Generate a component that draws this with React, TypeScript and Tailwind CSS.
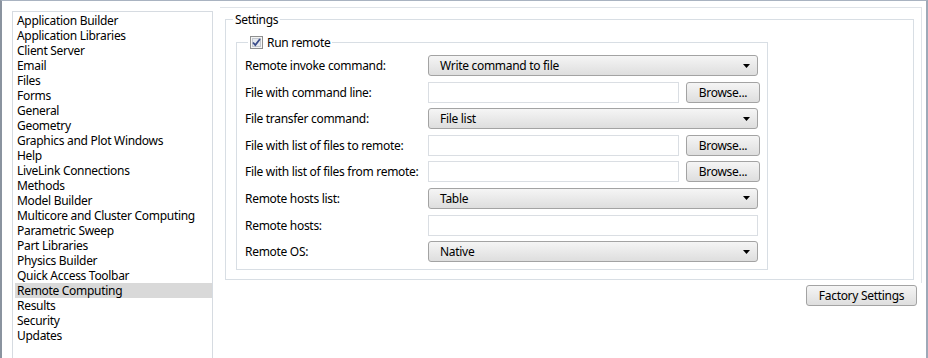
import React from "react";

const items = [
  "Application Builder",
  "Application Libraries",
  "Client Server",
  "Email",
  "Files",
  "Forms",
  "General",
  "Geometry",
  "Graphics and Plot Windows",
  "Help",
  "LiveLink Connections",
  "Methods",
  "Model Builder",
  "Multicore and Cluster Computing",
  "Parametric Sweep",
  "Part Libraries",
  "Physics Builder",
  "Quick Access Toolbar",
  "Remote Computing",
  "Results",
  "Security",
  "Updates",
];

function Arrow() {
  return (
    <svg width="7" height="4" viewBox="0 0 7 4" className="shrink-0">
      <polygon points="0,0 7,0 3.5,4" fill="#000" />
    </svg>
  );
}

function Select({ value }: { value: string }) {
  return (
    <div className="flex h-[21px] w-[330px] items-center justify-between rounded-[3px] border border-[#a3a3a3] bg-linear-to-b from-[#f5f5f5] to-[#dedede] pl-[11px] pr-[7px]">
      <span>{value}</span>
      <Arrow />
    </div>
  );
}

function TextBox({ w }: { w: string }) {
  return <div className={`h-[21px] ${w} border border-[#dadee3] bg-white`} />;
}

function Button({ label, w }: { label: string; w: string }) {
  return (
    <div className={`flex h-[21px] ${w} items-center justify-center rounded-[3px] border border-[#a3a3a3] bg-linear-to-b from-[#f5f5f5] to-[#dedede]`}>
      {label}
    </div>
  );
}

function Row({ label, children }: { label: string; children: React.ReactNode }) {
  return (
    <div className="flex h-[21px] items-center">
      <div className="w-[183px] shrink-0 whitespace-nowrap">{label}</div>
      {children}
    </div>
  );
}

export default function App() {
  return (
    <div
      className="flex h-[358px] w-[928px] overflow-hidden border-t border-l-2 border-r-2 border-t-[#a9b3c1] border-l-[#8a939f] border-r-[#9ea9b8] bg-white text-[12px] leading-[15px] tracking-[-0.3px] text-black"
      style={{ fontFamily: '"Noto Sans", "Open Sans", sans-serif' }}
    >
      {/* Left list */}
      <div className="ml-[10px] mt-[10px] h-[360px] w-[201px] shrink-0 border border-[#d6dbe1] pl-[2px] pt-[1px]">
        {items.map((it) => (
          <div
            key={it}
            className={`h-[15px] whitespace-nowrap pl-[2px] ${it === "Remote Computing" ? "bg-[#d9d9d9]" : ""}`}
          >
            {it}
          </div>
        ))}
      </div>

      {/* Right pane */}
      <div className="flex min-w-0 flex-1 flex-col">
        <div className="ml-[7px] mr-[4px] mt-[6px] border-t border-r border-[#dfe3e8] pb-[3px] pl-[5px] pr-[7px]">
          <fieldset className="mt-[4px] h-[268px] border border-[#d8dee4] px-[10px] pb-[8px]">
            <legend className="ml-[-3px] px-[2px]">Settings</legend>
            <fieldset className="mt-[8px] w-[532px] border border-[#d8dee4] pb-[7px] pl-[8px] pt-[5px]">
              <legend className="ml-[3px] flex items-center gap-[4px] px-[2px]">
                <svg width="13" height="13" viewBox="0 0 13 13" className="shrink-0">
                  <rect x="0.5" y="0.5" width="12" height="12" fill="#f4f4f4" stroke="#8e8f8f" />
                  <rect x="2.5" y="2.5" width="8" height="8" fill="#e6e9ee" stroke="#c3c8cf" />
                  <path d="M3 6.5 L5.3 9 L10 3" fill="none" stroke="#3a4c8a" strokeWidth="1.8" />
                </svg>
                <span>Run remote</span>
              </legend>
              <div className="flex flex-col gap-[5.6px]">
                <Row label="Remote invoke command:">
                  <Select value="Write command to file" />
                </Row>
                <Row label="File with command line:">
                  <TextBox w="w-[251px]" />
                  <div className="ml-[7px]"><Button label="Browse..." w="w-[74px]" /></div>
                </Row>
                <Row label="File transfer command:">
                  <Select value="File list" />
                </Row>
                <Row label="File with list of files to remote:">
                  <TextBox w="w-[251px]" />
                  <div className="ml-[7px]"><Button label="Browse..." w="w-[74px]" /></div>
                </Row>
                <Row label="File with list of files from remote:">
                  <TextBox w="w-[251px]" />
                  <div className="ml-[7px]"><Button label="Browse..." w="w-[74px]" /></div>
                </Row>
                <Row label="Remote hosts list:">
                  <Select value="Table" />
                </Row>
                <Row label="Remote hosts:">
                  <TextBox w="w-[330px]" />
                </Row>
                <Row label="Remote OS:">
                  <Select value="Native" />
                </Row>
              </div>
            </fieldset>
          </fieldset>
        </div>
        <div className="mr-[9px] mt-[2px] flex justify-end">
          <Button label="Factory Settings" w="w-[111px]" />
        </div>
      </div>
    </div>
  );
}
